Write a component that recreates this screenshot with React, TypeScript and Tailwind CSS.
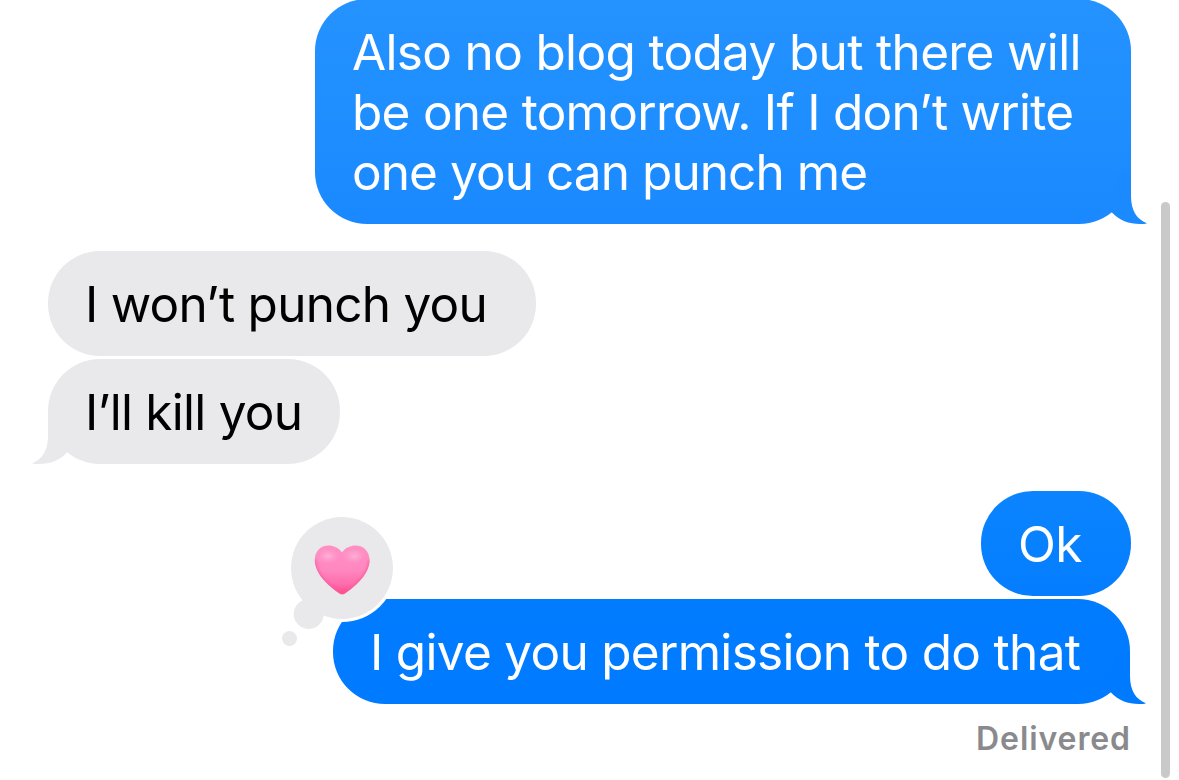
import clsx from 'clsx';

type Line = { text: string; spacing: string };

type BubbleProps = {
  side: 'sent' | 'received';
  lines: Line[];
  className: string;
  tail?: string;
};

function Tail({ side, color }: { side: 'sent' | 'received'; color: string }) {
  return (
    <svg
      width="36"
      height="54"
      viewBox="0 0 36 54"
      className={clsx('absolute bottom-[-2px]', side === 'sent' ? 'right-[-16px]' : 'left-[-16px] -scale-x-100')}
    >
      <path
        d="M8 0H20V24C20 38 25.5 47.5 36 51.2C34 52 32 52 29 52C18 52 8 48.500 0.7 40.3L0 30Z"
        fill={color}
      />
    </svg>
  );
}

function Bubble({ side, lines, className, tail }: BubbleProps) {
  return (
    <div
      className={clsx(
        'relative rounded-[52px] pl-[37px] text-[49.5px] leading-[60px]',
        side === 'sent' ? 'self-end text-white' : 'self-start bg-[#e9e9eb] text-black',
        className,
      )}
    >
      {tail && <Tail side={side} color={tail} />}
      {lines.map((line) => (
        <p key={line.text} className={clsx('relative whitespace-nowrap', line.spacing)}>
          {line.text}
        </p>
      ))}
    </div>
  );
}

function HeartReaction() {
  return (
    <svg width="120" height="140" viewBox="276 510 120 140" className="absolute left-[-57px] top-[-89px]">
      <defs>
        <linearGradient id="heart" x1="0" y1="0" x2="0" y2="1">
          <stop offset="0" stopColor="#ff90c4" />
          <stop offset="0.5" stopColor="#ff87c0" />
          <stop offset="0.78" stopColor="#ff6dac" />
          <stop offset="1" stopColor="#fc4486" />
        </linearGradient>
        <radialGradient id="shine">
          <stop offset="0" stopColor="#ffb7da" stopOpacity="0.9" />
          <stop offset="1" stopColor="#ff9bcb" stopOpacity="0" />
        </radialGradient>
        <clipPath id="heartClip">
          <path d="M342 552.500C338.500 547.500 333.500 545.500 328.500 545.500C320.500 545.500 314.800 551.500 314.800 560C314.800 573.500 327.500 585 338.500 592.800C341.500 594.800 343 594.800 346 592.800C357 585 369.600 573.500 369.600 560C369.600 551.500 363.500 545.500 355.500 545.500C350.500 545.500 345.500 547.500 342 552.500Z" />
        </clipPath>
        <filter id="soft" x="-20%" y="-20%" width="140%" height="140%">
          <feGaussianBlur stdDeviation="1.5" />
        </filter>
      </defs>
      <circle cx="342" cy="568" r="54" fill="#fff" />
      <circle cx="342" cy="568" r="51" fill="#e9e9eb" />
      <circle cx="308.700" cy="614" r="15" fill="#e9e9eb" />
      <circle cx="289.500" cy="638.500" r="7.500" fill="#e9e9eb" />
      <g clipPath="url(#heartClip)">
        <rect x="314" y="545" width="57" height="50" fill="url(#heart)" />
        <ellipse cx="328" cy="556" rx="12" ry="8" fill="url(#shine)" />
        <ellipse cx="354" cy="556" rx="12" ry="8" fill="url(#shine)" />
        <path
          d="M314.800 560C314.800 573.500 327.500 585 338.500 592.800C341.500 594.800 343 594.800 346 592.800C357 585 369.600 573.500 369.600 560"
          fill="none"
          stroke="#fb5a9c"
          strokeWidth="2.500"
          filter="url(#soft)"
        />
      </g>
    </svg>
  );
}

export default function App() {
  return (
    <main className="flex h-[780px] w-[1179px] overflow-hidden bg-white font-['Inter',sans-serif]">
      <div className="-mt-px flex w-[1131px] shrink-0 flex-col pl-12">
        <Bubble
          side="sent"
          className="h-[225px] w-[816px] bg-linear-to-b from-[#2493ff] to-[#1a89ff] pt-[23px]"
          tail="#1b8aff"
          lines={[
            { text: 'Also no blog today but there will', spacing: 'tracking-[-0.66px]' },
            { text: 'be one tomorrow. If I don’t write', spacing: 'tracking-[-0.73px]' },
            { text: 'one you can punch me', spacing: 'tracking-[-0.93px]' },
          ]}
        />
        <Bubble
          side="received"
          className="mt-[27px] h-[105px] w-[488px] pt-[23px]"
          lines={[{ text: 'I won’t punch you', spacing: 'tracking-[-0.74px]' }]}
        />
        <Bubble
          side="received"
          className="mt-[3px] h-[105px] w-[292px] pt-[23px]"
          tail="#e9e9eb"
          lines={[{ text: 'I’ll kill you', spacing: 'tracking-[-0.75px]' }]}
        />
        <Bubble
          side="sent"
          className="mt-[27px] h-[105px] w-[150px] bg-linear-to-b from-[#0c84ff] to-[#047eff] pt-[23px]"
          lines={[{ text: 'Ok', spacing: 'tracking-[-0.5px]' }]}
        />
        <div className="relative mt-[3px] mr-px self-end">
          <Bubble
            side="sent"
            className="h-[105px] w-[797px] bg-linear-to-b from-[#027cff] to-[#007aff] pt-[23px]"
            tail="#007aff"
            lines={[{ text: 'I give you permission to do that', spacing: 'tracking-[-0.7px]' }]}
          />
          <HeartReaction />
        </div>
        <p className="mt-[15px] self-end text-[32px] leading-[40px] font-semibold tracking-[0.9px] text-[#8a8a8e]">
          Delivered
        </p>
      </div>
      <div className="mt-[202px] ml-[30px] h-[576px] w-[9px] shrink-0 rounded-full bg-[#c9c9c9]" />
    </main>
  );
}
